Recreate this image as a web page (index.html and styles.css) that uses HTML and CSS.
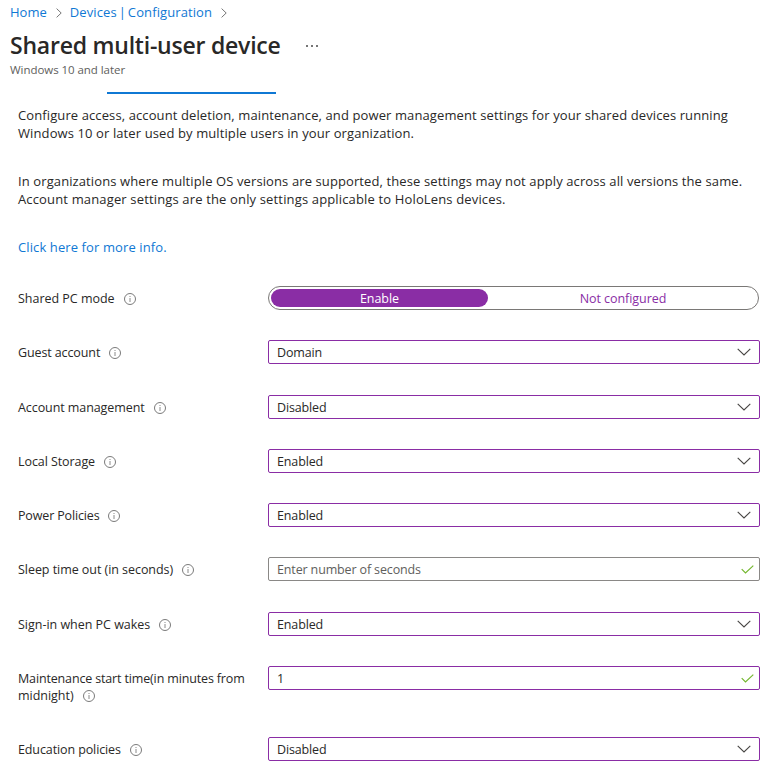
FILE: index.html
```
<!DOCTYPE html>
<html lang="en">
<head>
<meta charset="utf-8">
<title>Shared multi-user device</title>
<link rel="stylesheet" href="styles.css">
</head>
<body>
<svg class="defs" width="0" height="0">
  <symbol id="info" viewBox="0 0 12 12"><circle cx="6" cy="6" r="5.5" fill="none" stroke="#7a7a7a" stroke-width="1"/><path d="M6 5v4M6 3v1" stroke="#8a8a8a" stroke-width="1" fill="none"/></symbol>
  <symbol id="down" viewBox="0 0 14 8"><path d="M.7.8 7 7 13.3.8" fill="none" stroke="#484644" stroke-width="1.1"/></symbol>
  <symbol id="check" viewBox="0 0 13 9"><path d="M.7 4.2 4.5 8 12.3.6" fill="none" stroke="#74b72e" stroke-width="1.2"/></symbol>
  <symbol id="next" viewBox="0 0 6 10"><path d="M.6.6 5.2 5 .6 9.4" fill="none" stroke="#767676" stroke-width="1"/></symbol>
</svg>
<nav class="crumbs">
  <a class="crumb">Home</a><svg class="next"><use href="#next"/></svg>
  <a class="crumb path">Devices | Configuration</a><svg class="next"><use href="#next"/></svg>
</nav>
<header class="head">
  <div class="title-row"><h1 class="title">Shared multi-user device</h1>
    <svg class="more" viewBox="0 0 12 2"><path d="M0 0h2v2H0zM5 0h2v2H5zM10 0h2v2h-2z" fill="#767676"/></svg></div>
  <p class="subtitle">Windows 10 and later</p>
</header>
<div class="tab-line"></div>
<main class="content">
  <p class="para"><span class="line">Configure access, account deletion, maintenance, and power management settings for your shared devices running</span> <span class="line">Windows 10 or later used by multiple users in your organization.</span></p>
  <p class="para"><span class="line">In organizations where multiple OS versions are supported, these settings may not apply across all versions the same.</span> <span class="line wide">Account manager settings are the only settings applicable to HoloLens devices.</span></p>
  <p class="para"><a class="link">Click here for more info.</a></p>
  <div class="form">
    <div class="row"><div class="label"><span class="loose">Shared PC mode</span><svg class="info"><use href="#info"/></svg></div>
      <div class="toggle"><span class="option on">Enable</span><span class="option">Not configured</span></div></div>
    <div class="row late"><div class="label">Guest account<svg class="info"><use href="#info"/></svg></div>
      <div class="field">Domain<svg class="down"><use href="#down"/></svg></div></div>
    <div class="row"><div class="label"><span class="snug">Account management</span><svg class="info"><use href="#info"/></svg></div>
      <div class="field">Disabled<svg class="down"><use href="#down"/></svg></div></div>
    <div class="row"><div class="label"><span class="snug">Local Storage</span><svg class="info"><use href="#info"/></svg></div>
      <div class="field">Enabled<svg class="down"><use href="#down"/></svg></div></div>
    <div class="row"><div class="label"><span class="tight">Power Policies</span><svg class="info"><use href="#info"/></svg></div>
      <div class="field">Enabled<svg class="down"><use href="#down"/></svg></div></div>
    <div class="row late"><div class="label"><span class="mid">Sleep time out (in seconds)</span><svg class="info"><use href="#info"/></svg></div>
      <div class="field empty">Enter number of seconds<svg class="check"><use href="#check"/></svg></div></div>
    <div class="row"><div class="label"><span class="loose">Sign-in when PC wakes</span><svg class="info"><use href="#info"/></svg></div>
      <div class="field">Enabled<svg class="down"><use href="#down"/></svg></div></div>
    <div class="row tall"><div class="label"><span class="tight">Maintenance start time(in minutes from</span> <br><span class="loose">midnight)</span><svg class="info"><use href="#info"/></svg></div>
      <div class="field">1<svg class="check"><use href="#check"/></svg></div></div>
    <div class="row last"><div class="label">Education policies<svg class="info"><use href="#info"/></svg></div>
      <div class="field">Disabled<svg class="down"><use href="#down"/></svg></div></div>
  </div>
</main>
</body>
</html>
```
FILE: styles.css
```
* { box-sizing: border-box; }
body {
  margin: 0;
  height: 770px;
  overflow: hidden;
  background: #fff;
  color: #292827;
  font: 12.5px/17px "Open Sans", "Noto Sans", sans-serif;
}
.defs { position: absolute; }
h1, p { margin: 0; }
.crumbs {
  display: flex;
  align-items: center;
  height: 26px;
  padding: 0 0 1px 10px;
  font-size: 13px;
}
.crumb, .link { color: #0f78d4; }
.path { letter-spacing: 0.1px; word-spacing: -1.5px; }
.next { width: 6px; height: 10px; margin: 1px 8px 0 9px; }
.head { height: 66px; padding-left: 10px; }
.title-row { display: flex; align-items: center; height: 37px; padding-top: 2px; }
.title { font-size: 23px; font-weight: 600; line-height: 37px; letter-spacing: -0.22px; white-space: nowrap; }
.more { width: 12px; height: 2px; margin: 0 0 0 25px; }
.subtitle { font-size: 11.5px; line-height: 13px; color: #605e5c; letter-spacing: -0.05px; }
.tab-line { width: 169px; height: 2px; margin-left: 107px; background: #0f78d4; }
.content { padding: 12px 7px 0 18px; }
.para { font-size: 13px; line-height: 18px; letter-spacing: 0.105px; margin-bottom: 30px; }
.line { display: block; white-space: nowrap; }
.wide { letter-spacing: 0.15px; }
.row {
  display: grid;
  grid-template-columns: 250px 492px;
  align-items: start;
  height: 54px;
}
.late { height: 55px; }
.tall { height: 71px; }
.last { height: 24px; }
.label { padding-top: 4px; letter-spacing: -0.11px; white-space: nowrap; }
.snug { letter-spacing: -0.08px; }
.mid { letter-spacing: -0.05px; }
.loose { letter-spacing: -0.02px; }
.tight { letter-spacing: -0.15px; }
.info { width: 12px; height: 12px; margin-left: 9px; vertical-align: -2px; }
.field {
  display: flex;
  align-items: center;
  justify-content: space-between;
  height: 24px;
  padding: 0 8px;
  border: 1px solid #8a2da5;
  border-radius: 2px;
  letter-spacing: -0.14px;
}
.empty { border-color: #8a8886; color: #605e5c; }
.down { width: 14px; height: 8px; }
.check { width: 13px; height: 9px; margin-right: -3px; }
.toggle {
  display: flex;
  width: 491px;
  height: 24px;
  padding: 2px;
  border: 1px solid #7a7876;
  border-radius: 12px;
}
.option {
  width: 217px;
  height: 18px;
  line-height: 19px;
  text-align: center;
  color: #8a2da5;
  letter-spacing: -0.05px;
}
.option + .option { flex: 1; padding-left: 2px; }
.on { background: #8a2da5; color: #fff; border-radius: 9px; }
```
